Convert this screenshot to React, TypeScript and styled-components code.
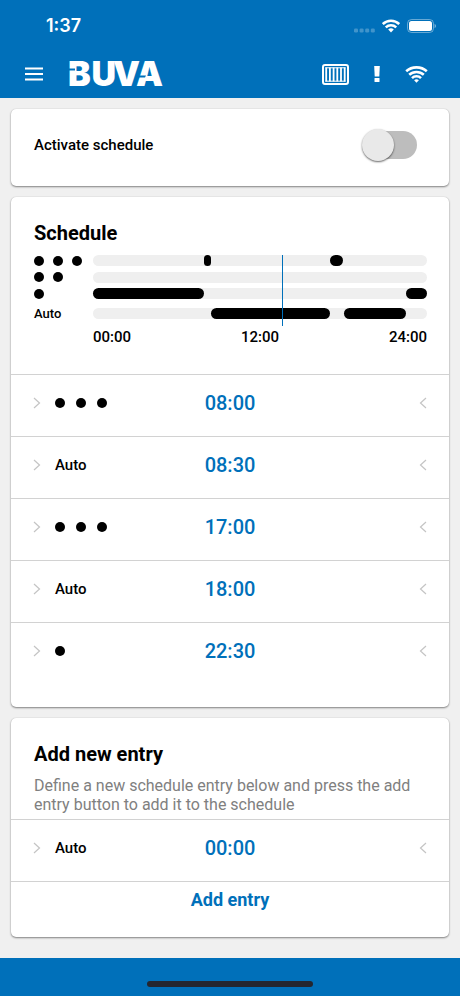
import React from "react";
import styled, { createGlobalStyle } from "styled-components";

const blue = "#0070ba";
const line = "#d2d2d2";

const GlobalStyle = createGlobalStyle`
  *, *::before, *::after { box-sizing: border-box; }
  body {
    margin: 0;
    background: #f0f0f0;
    color: #000;
    font-family: Roboto, "Liberation Sans", sans-serif;
    font-size: 15px;
    font-weight: 500;
  }
  button { font: inherit; border: 0; padding: 0; background: none; cursor: pointer; }
  svg { display: block; flex: none; }
  h2, p, ul { margin: 0; padding: 0; }
`;

const Page = styled.div`
  min-height: 100vh;
  display: flex;
  flex-direction: column;
`;

const Header = styled.header`
  background: ${blue};
  color: #fff;
`;

const StatusBar = styled.div`
  height: 50px;
  padding: 2px 24px 0 46px;
  display: flex;
  align-items: center;
  justify-content: space-between;
`;

const Clock = styled.span`
  font: 600 18px/24px Inter, sans-serif;
`;

const StatusIcons = styled.div`
  display: flex;
  align-items: center;
  gap: 7px;
`;

const Toolbar = styled.div`
  height: 48px;
  padding: 0 32px 0 24px;
  display: flex;
  align-items: center;
`;

const IconButton = styled.button`
  color: #fff;
  display: flex;
`;

const Brand = styled.a`
  margin-left: 24px;
  color: #fff;
`;

const Actions = styled.div`
  margin-left: auto;
  display: flex;
  align-items: center;
  gap: 24px;
`;

const Main = styled.main`
  flex: 1;
  padding: 11px 11px 20px;
  display: flex;
  flex-direction: column;
  gap: 11px;
`;

const Card = styled.section<{ $bottom?: number }>`
  padding-bottom: ${(p) => p.$bottom ?? 0}px;
  background: #fff;
  border-radius: 5px;
  box-shadow: 0 1px 2px rgba(0, 0, 0, 0.45), 0 0 1px rgba(0, 0, 0, 0.2);
`;

const SwitchRow = styled.label`
  height: 77px;
  padding: 0 32px 5px 23px;
  display: flex;
  align-items: center;
  justify-content: space-between;
`;

const Switch = styled.input`
  appearance: none;
  margin: 0;
  width: 52px;
  height: 28px;
  border-radius: 14px;
  background: #bdbdbd;
  display: flex;
  align-items: center;
  cursor: pointer;

  &::before {
    content: "";
    flex: none;
    width: 32px;
    height: 32px;
    margin-left: -3px;
    border-radius: 50%;
    background: #e9e9e9;
    box-shadow: 0 1px 2px rgba(0, 0, 0, 0.6);
  }
  &:checked { background: #80b8dd; }
  &:checked::before { margin-left: 23px; background: ${blue}; }
`;

const Title = styled.h2`
  padding: 24px 23px 0;
  font-size: 20px;
  line-height: 24px;
  font-weight: 700;
`;

const Chart = styled.div`
  padding: 7px 22px 0 23px;
  display: grid;
  grid-template-columns: 59px 1fr;
`;

const Labels = styled.div`
  display: grid;
  grid-template-rows: 17px 16px 17px 22px;
  align-items: center;
  font-size: 13px;
`;

const Tracks = styled(Labels)`
  position: relative;
`;

const Track = styled.div`
  position: relative;
  height: 11px;
  border-radius: 6px;
  background: #efefef;
`;

const Segment = styled.div`
  position: absolute;
  top: 0;
  bottom: 0;
  border-radius: 6px;
  background: #000;
`;

const Now = styled.div`
  position: absolute;
  top: 3px;
  bottom: -2px;
  width: 1px;
  background: ${blue};
`;

const Axis = styled.div`
  grid-column: 2;
  padding: 3px 0 27px;
  display: flex;
  justify-content: space-between;
  font-size: 15px;
  line-height: 20px;
`;

const Dots = styled.span<{ $gap: number }>`
  display: flex;
  gap: ${(p) => p.$gap}px;
`;

const Dot = styled.i`
  width: 10px;
  height: 10px;
  border-radius: 50%;
  background: #000;
`;

const Rows = styled.ul`
  list-style: none;
`;

const Row = styled.li`
  height: 62px;
  padding: 0 22px 5px;
  border-top: 1px solid ${line};
  display: grid;
  grid-template-columns: 1fr auto 1fr;
  align-items: center;
`;

const Mode = styled.button`
  display: flex;
  align-items: center;
  gap: 14px;
  color: #000;
`;

const Time = styled.button`
  color: ${blue};
  font-size: 20px;
  line-height: 24px;
`;

const End = styled.span`
  justify-self: end;
`;

const Description = styled.p`
  padding: 10px 22px 5px 23px;
  color: #808080;
  font-size: 16px;
  line-height: 19px;
  font-weight: 400;
`;

const AddRow = styled.div`
  border-top: 1px solid ${line};
  display: flex;
  justify-content: center;
`;

const AddButton = styled.button`
  height: 34px;
  color: ${blue};
  font-size: 18px;
  font-weight: 700;
`;

const Footer = styled.footer`
  height: 38px;
  padding-bottom: 9px;
  background: ${blue};
  display: flex;
  align-items: flex-end;
  justify-content: center;
`;

const HomeIndicator = styled.div`
  width: 36%;
  height: 6px;
  border-radius: 3px;
  background: #24262f;
`;

const StatusWifi = () => (
  <svg width="18" height="14" viewBox="0 0 22 16" fill="none" stroke="currentColor" strokeWidth="3" aria-hidden="true">
    <path d="M1 5.600C6.600 0.200 15.400 0.200 21 5.600" />
    <path d="M4.600 9.600C8.200 6.200 13.800 6.200 17.400 9.600" />
    <path d="M7.600 12.300Q11 9.300 14.400 12.300L11 15.800Z" fill="currentColor" stroke="none" />
  </svg>
);

const Wifi = () => (
  <svg width="23" height="17" viewBox="0 0 23 17" fill="none" stroke="currentColor" strokeWidth="2.600" aria-hidden="true">
    <path d="M1.200 5.300C6.800 0.100 16.200 0.100 21.800 5.300" />
    <path d="M4.200 8.800C8.300 5 14.700 5 18.800 8.800" />
    <path d="M7 12.100C9.500 9.700 13.500 9.700 16 12.100" />
    <path d="M9.100 14.300Q11.500 12.400 13.900 14.300L11.500 16.700Z" fill="currentColor" stroke="none" />
  </svg>
);

const Signal = () => (
  <svg width="21" height="14" viewBox="0 0 21 14" fill="#fff" fillOpacity="0.25" aria-hidden="true">
    {[0, 5.6, 11.2, 16.8].map((x) => (
      <rect key={x} x={x} y="9.500" width="4" height="4" rx="1.300" />
    ))}
  </svg>
);

const Battery = () => (
  <svg width="29" height="14" viewBox="0 0 29 14" fill="none" aria-hidden="true">
    <rect x="0.500" y="0.500" width="26" height="13" rx="4" stroke="#fff" strokeOpacity="0.4" />
    <rect x="2" y="2" width="23" height="10" rx="2.500" fill="#fff" />
    <path d="M27.600 4.800Q29 5.500 29 7T27.600 9.200Z" fill="#fff" fillOpacity="0.5" />
  </svg>
);

const Menu = () => (
  <svg width="20" height="14" viewBox="0 0 20 14" stroke="currentColor" strokeWidth="2" aria-hidden="true">
    <path d="M1 1.500H19M1 7H19M1 12.500H19" />
  </svg>
);

const Logo = () => (
  <svg width="100" height="48" viewBox="0 0 100 48" role="img" aria-label="BUVA">
    <text x="0 23.500 45 68" y="36" fill="#fff" fontFamily="Inter, sans-serif" fontSize="34" fontWeight="900">
      BUVA
    </text>
    <path d="M0 18.500H7V20.500H0Z" fill={blue} />
    <path d="M71 25.500H78L77 27.500H70Z" fill={blue} />
  </svg>
);

const Filter = () => (
  <svg width="27" height="21" viewBox="0 0 27 21" fill="none" stroke="currentColor" aria-hidden="true">
    <rect x="1" y="1" width="25" height="19" rx="2" strokeWidth="2" />
    <path d="M4.200 3.500V17.500M7.900 3.500V17.500M11.600 3.500V17.500M15.300 3.500V17.500M19 3.500V17.500M22.700 3.500V17.500" strokeWidth="1.800" />
    <path d="M3.300 3.800H23.600M3.300 17.200H23.600" strokeWidth="1" />
  </svg>
);

const Alert = () => (
  <svg width="8" height="18" viewBox="0 0 8 18" fill="currentColor" aria-hidden="true">
    <path d="M1.200 1H6.800L6.300 11.500H1.700Z" />
    <rect x="1.500" y="13" width="5" height="4" rx="0.500" />
  </svg>
);

const Chevron = ({ left }: { left?: boolean }) => (
  <svg width="8" height="12" viewBox="0 0 8 12" fill="none" stroke="#c4c4c4" strokeWidth="1.200" aria-hidden="true">
    <path d={left ? "M7 1L1.500 6L7 11" : "M1 1L6.500 6L1 11"} />
  </svg>
);

const Level = ({ level, gap }: { level: number; gap: number }) =>
  level === 0 ? (
    <span>Auto</span>
  ) : (
    <Dots $gap={gap} role="img" aria-label={`Level ${level}`}>
      {Array.from({ length: level }, (_, i) => (
        <Dot key={i} />
      ))}
    </Dots>
  );

const Entry = ({ level, time }: { level: number; time: string }) => (
  <Row>
    <Mode type="button">
      <Chevron />
      <Level level={level} gap={11} />
    </Mode>
    <Time type="button">{time}</Time>
    <End>
      <Chevron left />
    </End>
  </Row>
);

const entries = [
  { level: 3, time: "08:00" },
  { level: 0, time: "08:30" },
  { level: 3, time: "17:00" },
  { level: 0, time: "18:00" },
  { level: 1, time: "22:30" },
];

const tracks: { level: number; spans: [number, number][] }[] = [
  { level: 3, spans: [[8, 8.5], [17, 18]] },
  { level: 2, spans: [] },
  { level: 1, spans: [[0, 8], [22.5, 24]] },
  { level: 0, spans: [[8.5, 17], [18, 22.5]] },
];

const now = 13 + 37 / 60;
const percent = (hours: number) => `${(hours / 24) * 100}%`;

export default function App() {
  return (
    <Page>
      <GlobalStyle />
      <Header>
        <StatusBar>
          <Clock>1:37</Clock>
          <StatusIcons>
            <Signal />
            <StatusWifi />
            <Battery />
          </StatusIcons>
        </StatusBar>
        <Toolbar>
          <IconButton type="button" aria-label="Menu"><Menu /></IconButton>
          <Brand href="#"><Logo /></Brand>
          <Actions>
            <IconButton type="button" aria-label="Filter"><Filter /></IconButton>
            <IconButton type="button" aria-label="Alerts"><Alert /></IconButton>
            <IconButton type="button" aria-label="Connection"><Wifi /></IconButton>
          </Actions>
        </Toolbar>
      </Header>

      <Main>
        <Card>
          <SwitchRow>
            Activate schedule
            <Switch type="checkbox" role="switch" />
          </SwitchRow>
        </Card>

        <Card $bottom={23}>
          <Title>Schedule</Title>
          <Chart>
            <Labels>
              {tracks.map((t) => (
                <Level key={t.level} level={t.level} gap={9} />
              ))}
            </Labels>
            <Tracks>
              {tracks.map((t) => (
                <Track key={t.level}>
                  {t.spans.map(([from, to]) => (
                    <Segment key={from} style={{ left: percent(from), width: percent(to - from) }} />
                  ))}
                </Track>
              ))}
              <Now style={{ left: percent(now) }} />
            </Tracks>
            <Axis>
              <span>00:00</span>
              <span>12:00</span>
              <span>24:00</span>
            </Axis>
          </Chart>
          <Rows>
            {entries.map((e) => (
              <Entry key={e.time} {...e} />
            ))}
          </Rows>
        </Card>

        <Card $bottom={21}>
          <Title>Add new entry</Title>
          <Description>
            Define a new schedule entry below and press the add entry button to add it to the schedule
          </Description>
          <Rows>
            <Entry level={0} time="00:00" />
          </Rows>
          <AddRow>
            <AddButton type="button">Add entry</AddButton>
          </AddRow>
        </Card>
      </Main>

      <Footer>
        <HomeIndicator />
      </Footer>
    </Page>
  );
}
